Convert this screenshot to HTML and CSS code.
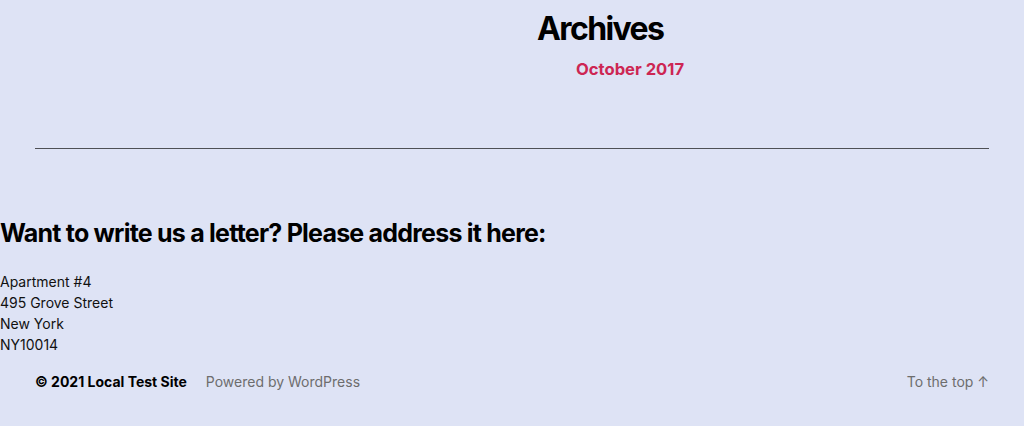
FILE: index.html
```html
<!DOCTYPE html>
<html>
<head>
<meta charset="utf-8">
<link rel="stylesheet" href="styles.css">
</head>
<body>
<section class="archives">
  <h2 class="archives-title">Archives</h2>
  <ul class="archives-list"><li><a href="#">October 2017</a></li></ul>
</section>
<hr class="sep">
<section class="letter">
  <h2 class="letter-title">Want to write us a letter? Please address it here:</h2>
  <p class="address">Apartment #4<br>495 Grove Street<br>New York<br>NY10014</p>
</section>
<footer class="footer">
  <div class="credits">
    <span class="copy">© 2021 Local Test Site</span>
    <span class="powered">Powered by WordPress</span>
  </div>
  <a class="totop" href="#">To the top ↑</a>
</footer>
</body>
</html>
```
FILE: styles.css
```css
html, body { margin: 0; padding: 0; }
body {
  background: #dee3f5;
  font-family: Inter, "Noto Sans", sans-serif;
  color: #000;
  width: 1024px;
  height: 426px;
  overflow: hidden;
}
.archives { padding-left: 537px; padding-top: 9px; }
.archives-title {
  margin: 0;
  font-size: 32px;
  font-weight: 700;
  letter-spacing: -1.6px;
  line-height: 40px;
}
.archives-list { list-style: none; margin: 10px 0 0; padding: 0 0 0 39px; }
.archives-list a {
  color: #cd2653;
  text-decoration: none;
  font-weight: 700;
  font-size: 16.6px;
  line-height: 20px;
}
.sep {
  margin: 69px 35px 0;
  border: 0;
  border-top: 1px solid #4e5055;
  height: 0;
}
.letter { padding-top: 68px; }
.letter-title {
  margin: 0;
  font-size: 25px;
  font-weight: 700;
  letter-spacing: -0.78px;
  line-height: 32px;
}
.address {
  margin: 22px 0 0;
  font-size: 14px;
  line-height: 21px;
  color: #111;
}
.footer {
  display: flex;
  justify-content: space-between;
  align-items: center;
  margin: 18px 35px 0;
  font-size: 14px;
}
.credits { display: flex; gap: 19px; }
.copy { font-weight: 700; color: #000; }
.powered, .totop { color: #6d6d6d; text-decoration: none; }
```
